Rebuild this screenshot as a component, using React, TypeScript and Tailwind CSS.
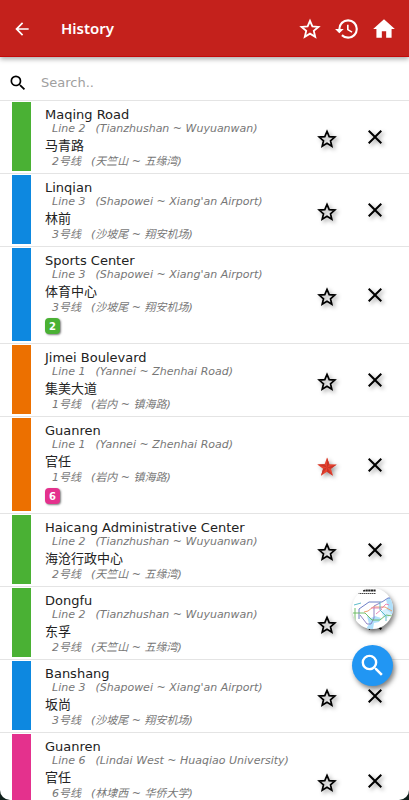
import { MdArrowBack, MdClose, MdHistory, MdHome, MdSearch } from 'react-icons/md';

type LineId = 1 | 2 | 3 | 6;

type Stop = {
  name: string;
  zh: string;
  line: LineId;
  transfer?: LineId;
  starred?: boolean;
};

const lines = {
  1: { color: 'bg-[#ec7000]', route: 'Yannei ~ Zhenhai Road', routeZh: '岩内 ~ 镇海路' },
  2: { color: 'bg-[#4ab134]', route: 'Tianzhushan ~ Wuyuanwan', routeZh: '天竺山 ~ 五缘湾' },
  3: { color: 'bg-[#0d88e0]', route: "Shapowei ~ Xiang'an Airport", routeZh: '沙坡尾 ~ 翔安机场' },
  6: { color: 'bg-[#e4318d]', route: 'Lindai West ~ Huaqiao University', routeZh: '林埭西 ~ 华侨大学' },
};

const stops: Stop[] = [
  { name: 'Maqing Road', zh: '马青路', line: 2 },
  { name: 'Linqian', zh: '林前', line: 3 },
  { name: 'Sports Center', zh: '体育中心', line: 3, transfer: 2 },
  { name: 'Jimei Boulevard', zh: '集美大道', line: 1 },
  { name: 'Guanren', zh: '官任', line: 1, transfer: 6, starred: true },
  { name: 'Haicang Administrative Center', zh: '海沧行政中心', line: 2 },
  { name: 'Dongfu', zh: '东孚', line: 2 },
  { name: 'Banshang', zh: '坂尚', line: 3 },
  { name: 'Guanren', zh: '官任', line: 6 },
];

const iconShadow = 'drop-shadow-[2px_2px_2px_rgba(0,0,0,0.4)]';

function Star({ className }: { className: string }) {
  return (
    <svg viewBox="0 0 24 24" className={className} fill="none" stroke="currentColor" strokeWidth="1.700">
      <path d="M12 4.400L14.200 9.600L19.800 10.050L15.500 13.750L16.800 19.250L12 16.300L7.200 19.250L8.500 13.750L4.200 10.050L9.800 9.600Z" />
    </svg>
  );
}

function RedStar() {
  return (
    <svg viewBox="0 0 24 24" className="size-6">
      <path d="M12 2.400L14.400 9.300L21.700 9.450L15.900 13.850L18 20.850L12 16.700L6 20.850L8.100 13.850L2.300 9.450L9.600 9.300Z" fill="#e8432f" />
      <path
        d="M12 2.400V12.600L14.400 9.300ZM21.700 9.450L12 12.600L15.900 13.850ZM18 20.850L12 12.600V16.700ZM6 20.850L12 12.600L8.100 13.850ZM2.300 9.450L12 12.600L9.600 9.300Z"
        fill="#c9352a"
      />
    </svg>
  );
}

function MetroMap() {
  return (
    <svg viewBox="0 0 41 41" className="size-full" fill="none" strokeWidth="0.9">
      <path d="M34 12l4-3 3 6v11l-4 1-3-5 2-4zM15 28l4 2 4-2 6 2-2 4-5 1-1 6h-7l3-5z" fill="#b0e0fb" />
      <path d="M29 23l5-2 5 4-3 5-5-1z" fill="#d6f0fd" />
      <path d="M7 31v-10l10-7h13l6-4h3" stroke="#5c6fc0" />
      <path d="M8 27l7 9h4l3-6V18l6-3" stroke="#8376bd" />
      <path d="M3 20v14M1 25h12l7 7h8l6-5 6 1" stroke="#63b85a" />
      <path d="M12 24l4-1 5-4h12l7 4" stroke="#ee9560" />
      <path d="M19 20h11l4-4 3 1M24 26l6-5" stroke="#e77cae" />
      <path d="M28 14v8l6 6v5M2 17l7-2" stroke="#4cb4c4" />
      <path d="M11 2.500h13" stroke="#222" strokeWidth="2.200" strokeDasharray="2.200 0.400" />
      <path d="M6 5.500h18" stroke="#444" strokeWidth="1" strokeDasharray="1.500 0.500" />
    </svg>
  );
}

function StopRow({ stop }: { stop: Stop }) {
  const line = lines[stop.line];
  return (
    <li className="flex border-t border-[#e4e4e4] pt-px pr-4 pb-0.5 pl-3 last:min-h-[97px]">
      <div className={`w-[19px] shrink-0 ${line.color}`} />
      <div className="min-w-0 grow pt-[5px] pb-0.5 pl-3.5">
        <h2 className="text-[13px] leading-4 text-[#222]">{stop.name}</h2>
        <p className="pl-[7px] text-[11px] leading-3 text-[#777] italic">
          Line {stop.line}
          <span className="ml-2.5">({line.route})</span>
        </p>
        <h3 className="mt-0.5 text-[13px] leading-[18px] text-[#222]">{stop.zh}</h3>
        <p className="pl-[7px] text-[11px] leading-[14px] text-[#777] italic">
          {stop.line}号线
          <span className="ml-2.5">({line.routeZh})</span>
        </p>
        {stop.transfer && (
          <span
            className={`mt-[3px] mb-[5px] flex h-4 w-[15px] items-center justify-center rounded text-[10px] font-bold text-white shadow-[1px_1px_2px_rgba(0,0,0,0.5)] ${lines[stop.transfer].color}`}
          >
            {stop.transfer}
          </span>
        )}
      </div>
      <div className="flex shrink-0 items-center gap-6">
        <button aria-label="Favourite" className={`mt-1 ${iconShadow}`}>
          {stop.starred ? <RedStar /> : <Star className="size-6" />}
        </button>
        <button aria-label="Remove" className={`mr-1.5 ${iconShadow}`}>
          <MdClose className="size-6" />
        </button>
      </div>
    </li>
  );
}

export default function App() {
  return (
    <div className="h-screen overflow-hidden bg-white font-['DejaVu_Sans','Noto_Sans_CJK_SC',sans-serif] text-black">
      <header className="relative flex h-[57px] items-center border-b border-[#c40808] bg-[#c4211c] pt-px pr-3 pl-3 text-white shadow-[0_2px_5px_rgba(0,0,0,0.35)]">
        <button aria-label="Back">
          <MdArrowBack className="size-5" />
        </button>
        <h1 className="grow pl-[29px] font-['Noto_Sans'] text-[15px] font-semibold">History</h1>
        <nav className="flex items-center gap-[11px]">
          <button aria-label="Favourites">
            <Star className="size-[26px]" />
          </button>
          <button aria-label="History">
            <MdHistory className="size-[26px]" />
          </button>
          <button aria-label="Home">
            <MdHome className="size-[26px]" />
          </button>
        </nav>
      </header>

      <label className="flex h-[43px] items-center pt-2 pl-2">
        <MdSearch className="size-5" />
        <input
          type="search"
          aria-label="Search"
          placeholder="Search.."
          className="ml-[13px] min-w-0 grow text-[13px] outline-none placeholder:text-[#a0a0a0]"
        />
      </label>

      <ul>
        {stops.map((stop, i) => (
          <StopRow key={i} stop={stop} />
        ))}
      </ul>

      <div className="fixed right-4 bottom-[114px] flex flex-col gap-4">
        <button
          aria-label="Metro map"
          className="size-[41px] overflow-hidden rounded-full bg-white shadow-[2px_3px_5px_rgba(0,0,0,0.5)]"
        >
          <MetroMap />
        </button>
        <button
          aria-label="Search stations"
          className="flex size-[41px] items-center justify-center rounded-full bg-[#2196f3] text-white shadow-[2px_3px_5px_rgba(0,0,0,0.5)]"
        >
          <MdSearch className="size-[29px]" />
        </button>
      </div>

      {/* dark rounded corners of the device frame */}
      <div className="pointer-events-none fixed inset-0 rounded-b-[10px] shadow-[0_0_0_8px_#10201c]" />
    </div>
  );
}
